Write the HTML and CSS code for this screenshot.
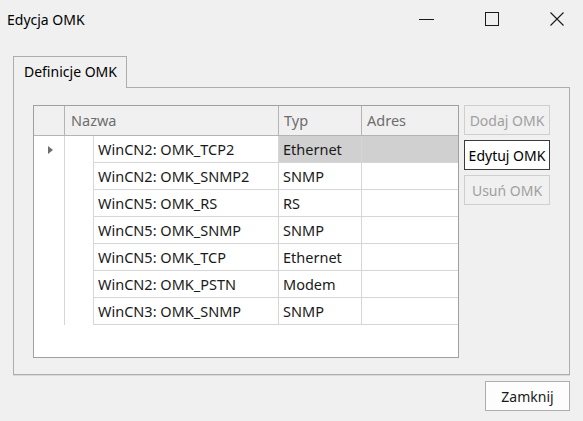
FILE: index.html
```html
<!DOCTYPE html>
<html lang="pl">
<head>
<meta charset="utf-8">
<title>Edycja OMK</title>
<link rel="stylesheet" href="styles.css">
</head>
<body>
<div class="window">
  <div class="titlebar">
    <span class="title">Edycja OMK</span>
    <div class="caption-btns">
      <svg class="cap-min" width="15" height="15" viewBox="0 0 15 15"><line x1="0" y1="7.5" x2="15" y2="7.5" stroke="#1a1a1a" stroke-width="1"/></svg>
      <svg class="cap-max" width="14" height="14" viewBox="0 0 14 14"><rect x="0.5" y="0.5" width="13" height="13" fill="none" stroke="#1a1a1a" stroke-width="1"/></svg>
      <svg class="cap-close" width="14" height="14" viewBox="0 0 14 14"><path d="M0.5 0.5 L13.5 13.5 M13.5 0.5 L0.5 13.5" stroke="#1a1a1a" stroke-width="1.1" fill="none"/></svg>
    </div>
  </div>
  <div class="content">
    <div class="tabs"><div class="tab">Definicje OMK</div></div>
    <div class="panel">
      <div class="grid">
        <div class="ghead">
          <div class="hc rh"></div>
          <div class="hc c-name">Nazwa</div>
          <div class="hc c-typ">Typ</div>
          <div class="hc c-adres">Adres</div>
        </div>
        <div class="gbody">
          <div class="row">
            <div class="rhcell"><span class="arrow"></span></div>
            <div class="indent"></div>
            <div class="cell c-name">WinCN2: OMK_TCP2</div>
            <div class="cell c-typ sel">Ethernet</div>
            <div class="cell c-adres sel"></div>
          </div>
          <div class="row">
            <div class="rhcell"></div>
            <div class="indent"></div>
            <div class="cell c-name">WinCN2: OMK_SNMP2</div>
            <div class="cell c-typ">SNMP</div>
            <div class="cell c-adres"></div>
          </div>
          <div class="row">
            <div class="rhcell"></div>
            <div class="indent"></div>
            <div class="cell c-name">WinCN5: OMK_RS</div>
            <div class="cell c-typ">RS</div>
            <div class="cell c-adres"></div>
          </div>
          <div class="row">
            <div class="rhcell"></div>
            <div class="indent"></div>
            <div class="cell c-name">WinCN5: OMK_SNMP</div>
            <div class="cell c-typ">SNMP</div>
            <div class="cell c-adres"></div>
          </div>
          <div class="row">
            <div class="rhcell"></div>
            <div class="indent"></div>
            <div class="cell c-name">WinCN5: OMK_TCP</div>
            <div class="cell c-typ">Ethernet</div>
            <div class="cell c-adres"></div>
          </div>
          <div class="row">
            <div class="rhcell"></div>
            <div class="indent"></div>
            <div class="cell c-name">WinCN2: OMK_PSTN</div>
            <div class="cell c-typ">Modem</div>
            <div class="cell c-adres"></div>
          </div>
          <div class="row">
            <div class="rhcell"></div>
            <div class="indent"></div>
            <div class="cell c-name">WinCN3: OMK_SNMP</div>
            <div class="cell c-typ">SNMP</div>
            <div class="cell c-adres"></div>
          </div>
        </div>
      </div>
      <div class="side-btns">
        <button class="btn disabled">Dodaj OMK</button>
        <button class="btn focused">Edytuj OMK</button>
        <button class="btn disabled">Usuń OMK</button>
      </div>
    </div>
    <div class="footer">
      <button class="btn close-btn">Zamknij</button>
    </div>
  </div>
</div>
</body>
</html>
```
FILE: styles.css
```css
* { box-sizing: border-box; }

html, body {
  margin: 0;
  padding: 0;
  background: #f0f0f0;
}

body {
  font-family: "Noto Sans", "Open Sans", sans-serif;
  font-size: 14px;
  color: #1a1a1a;
}

.window {
  width: 583px;
  height: 421px;
  background: #f0f0f0;
  overflow: hidden;
}

.titlebar {
  height: 38px;
  display: flex;
  align-items: center;
  padding-left: 7px;
  padding-right: 19px;
}

.title {
  font-size: 14px;
  color: #000;
}

.caption-btns {
  margin-left: auto;
  display: flex;
  align-items: center;
  gap: 51px;
}

.caption-btns svg { display: block; }

.content {
  padding: 18px 13px 0 13px;
}

.tabs {
  display: flex;
  height: 31px;
}

.tab {
  position: relative;
  z-index: 1;
  width: 114px;
  height: 32px;
  border: 1px solid #adadad;
  border-bottom: none;
  background: #f0f0f0;
  padding-left: 10px;
  line-height: 30px;
  color: #000;
}

.panel {
  width: 557px;
  height: 288px;
  border: 1px solid #adadad;
  box-shadow: 0 1px 0 #dadada;
  padding: 17px 19px;
  display: flex;
  align-items: flex-start;
  gap: 5px;
}

.grid {
  width: 426px;
  height: 253px;
  border: 1px solid #a0a0a0;
  background: #fff;
  display: flex;
  flex-direction: column;
  font-size: 14.5px;
}

.ghead {
  display: flex;
  height: 30px;
  border-bottom: 1px solid #b4b4b4;
  background: #f0f0f0;
}

.hc {
  height: 29px;
  line-height: 29px;
  color: #6d6d6d;
  padding-left: 5px;
  border-right: 1px solid #b4b4b4;
  white-space: nowrap;
}

.hc.rh { width: 31px; }
.hc.c-name { width: 214px; padding-left: 6px; }
.hc.c-typ { width: 83px; }
.hc.c-adres { width: 96px; border-right: none; }

.gbody {
  display: flex;
  flex-direction: column;
}

.row {
  display: flex;
  height: 27px;
}

.rhcell {
  width: 31px;
  height: 27px;
  border-right: 1px solid #d6d6d6;
  display: flex;
  align-items: center;
  justify-content: center;
  padding-left: 2px;
}

.arrow {
  display: block;
  width: 0;
  height: 0;
  border-left: 5px solid #6e6e6e;
  border-top: 4.5px solid transparent;
  border-bottom: 4.5px solid transparent;
}

.indent {
  width: 28px;
  height: 27px;
}

.cell {
  height: 27px;
  line-height: 26px;
  border-bottom: 1px solid #d6d6d6;
  border-right: 1px solid #d6d6d6;
  padding-left: 4px;
  white-space: nowrap;
  color: #1a1a1a;
}

.cell.c-name { width: 186px; border-left: 1px solid #d6d6d6; }
.cell.c-typ { width: 83px; }
.cell.c-adres { width: 96px; border-right: none; }

.cell.sel { background: #d0d0d0; }

.side-btns {
  width: 86px;
  display: flex;
  flex-direction: column;
  gap: 5px;
}

.btn {
  font-family: "Noto Sans", "Open Sans", sans-serif;
  font-size: 14px;
  height: 30px;
  width: 86px;
  padding: 0;
  margin: 0;
  border: 1px solid #adadad;
  background: #fdfdfd;
  color: #1a1a1a;
  white-space: nowrap;
}

.btn.disabled {
  background: #f0f0f0;
  border-color: #cfcfcf;
  color: #a0a0a0;
}

.btn.focused {
  background: #fff;
  border-color: #3a3a3a;
  color: #000;
}

.footer {
  display: flex;
  justify-content: flex-end;
  padding-top: 6px;
}

.close-btn {
  width: 85px;
  height: 30px;
}
```
